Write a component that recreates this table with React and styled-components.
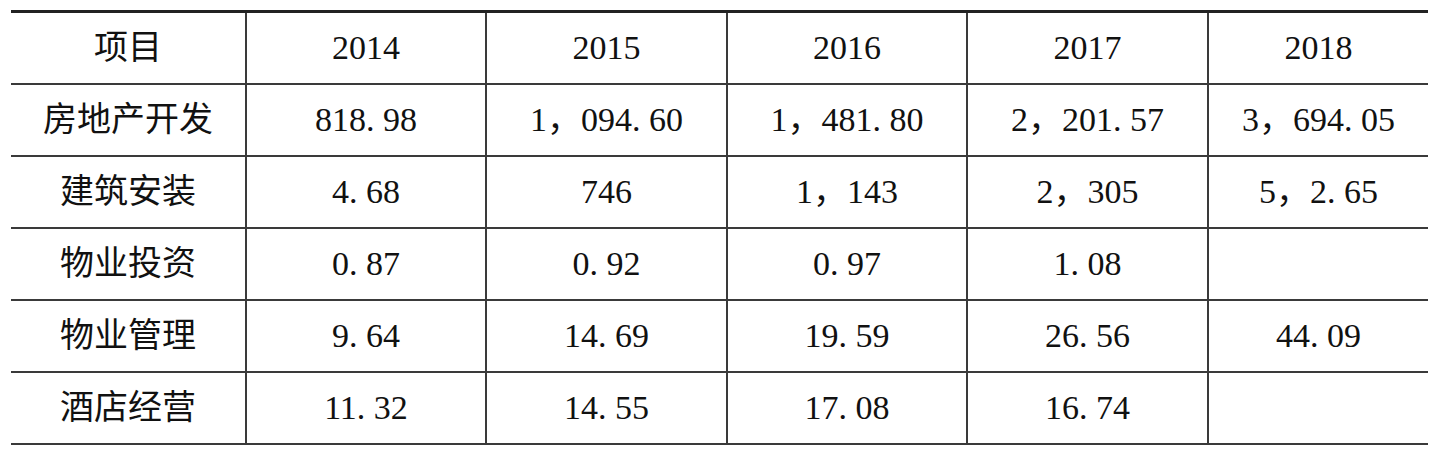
import React from "react";
import styled, { createGlobalStyle } from "styled-components";

const GlobalStyle = createGlobalStyle`
	html, body {
		margin: 0;
		padding: 0;
		background: #fff;
	}
`;

const Page = styled.div`
	padding: 10px 0 0 11px;
	font-family: "Liberation Serif", "Noto Sans CJK SC", serif;
	color: #111;
`;

const Table = styled.table`
	border-collapse: collapse;
	table-layout: fixed;
	width: 1417px;
	border-top: 3px solid #222;
	border-bottom: 2px solid #3a3a3a;
`;

const Cell = styled.td`
	height: 70px;
	padding: 0;
	text-align: center;
	vertical-align: middle;
	font-size: 34px;
	line-height: 1;
	border-top: 2px solid #3a3a3a;
	border-left: ${(p) => (p.first ? "none" : "2px solid #3a3a3a")};
	white-space: nowrap;
`;

const HeadCell = styled(Cell).attrs({ as: "th" })`
	font-weight: normal;
	border-top: none;
`;

const columns = [235, 240, 241, 240, 241, 220];
const years = ["2014", "2015", "2016", "2017", "2018"];

const rows = [
	["房地产开发", "818. 98", "1，094. 60", "1，481. 80", "2，201. 57", "3，694. 05"],
	["建筑安装", "4. 68", "746", "1，143", "2，305", "5，2. 65"],
	["物业投资", "0. 87", "0. 92", "0. 97", "1. 08", ""],
	["物业管理", "9. 64", "14. 69", "19. 59", "26. 56", "44. 09"],
	["酒店经营", "11. 32", "14. 55", "17. 08", "16. 74", ""],
];

export default function App() {
	return (
		<>
			<GlobalStyle />
			<Page>
				<Table>
					<colgroup>
						{columns.map((w, i) => (
							<col key={i} style={{ width: w }} />
						))}
					</colgroup>
					<thead>
						<tr>
							<HeadCell first>项目</HeadCell>
							{years.map((y) => (
								<HeadCell key={y}>{y}</HeadCell>
							))}
						</tr>
					</thead>
					<tbody>
						{rows.map((row) => (
							<tr key={row[0]}>
								{row.map((v, i) => (
									<Cell key={i} first={i === 0}>
										{v}
									</Cell>
								))}
							</tr>
						))}
					</tbody>
				</Table>
			</Page>
		</>
	);
}
